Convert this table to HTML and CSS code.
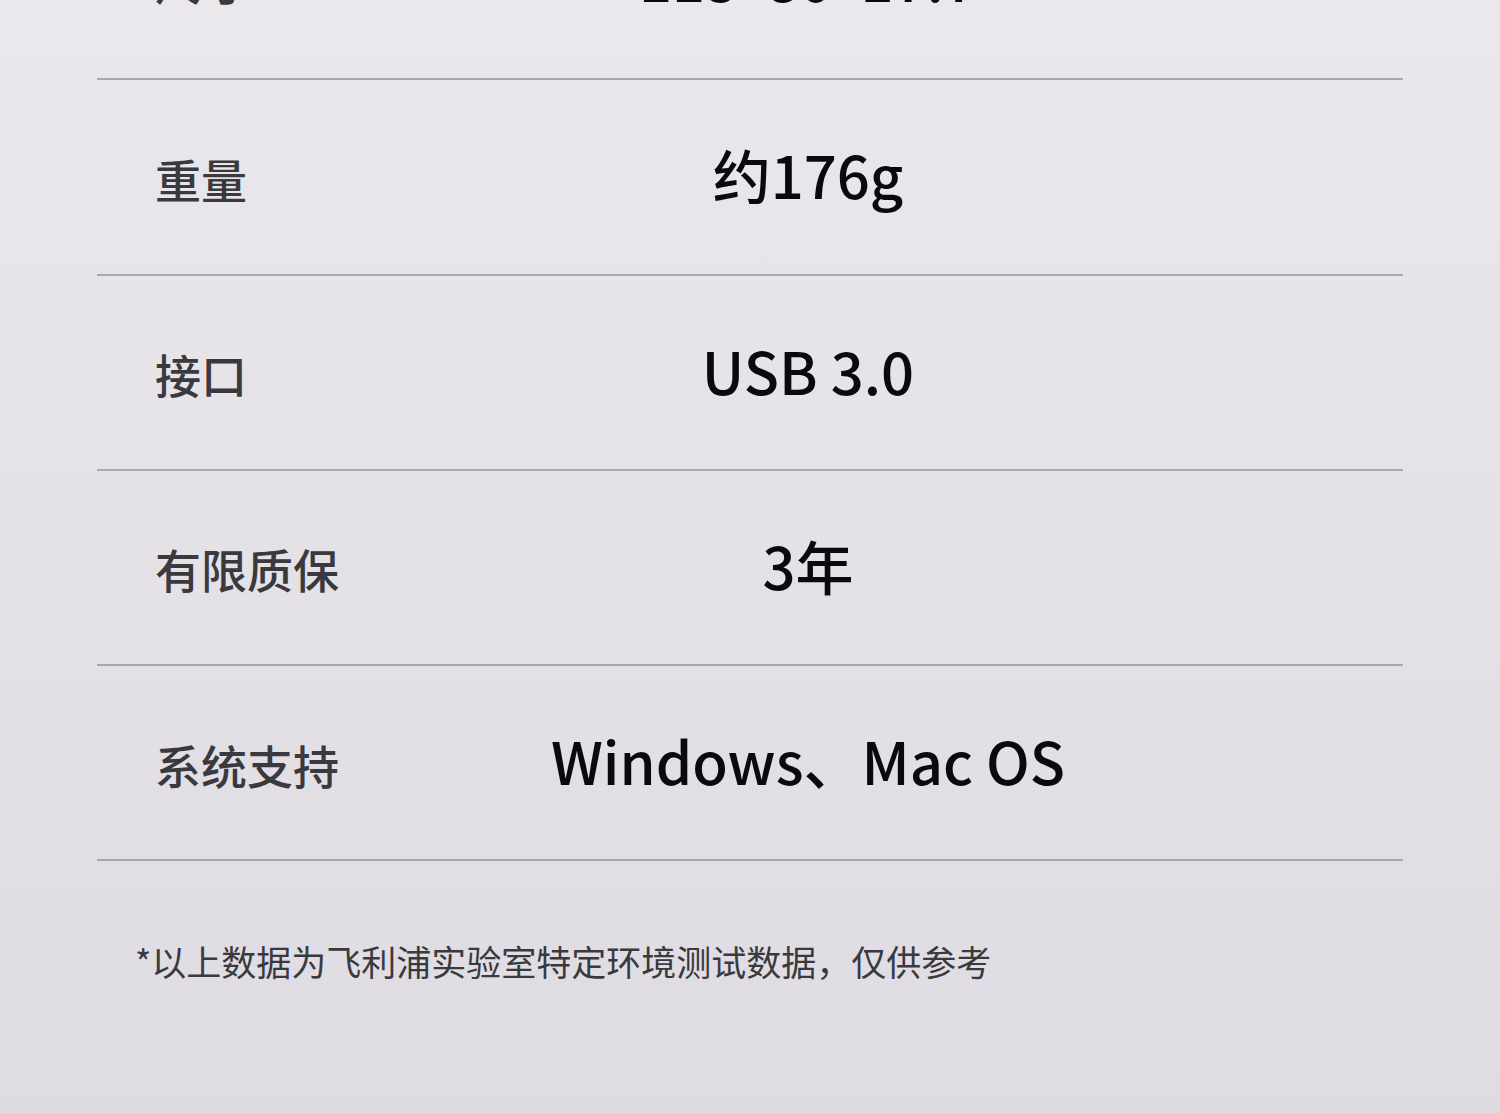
FILE: index.html
```html
<html>

<head>
  <meta name="viewport" content="width=device-width, initial-scale=1" />
  <link rel="stylesheet" href="styles.css">
  <title>产品参数</title>
</head>

<body>
  <div class="specs">
    <div class="spec-row spec-row--first">
      <div class="spec-label">尺寸</div>
      <div class="spec-value">115*80*17.7</div>
    </div>
    <div class="spec-row">
      <div class="spec-label">重量</div>
      <div class="spec-value">约176g</div>
    </div>
    <div class="spec-row">
      <div class="spec-label">接口</div>
      <div class="spec-value">USB 3.0</div>
    </div>
    <div class="spec-row">
      <div class="spec-label">有限质保</div>
      <div class="spec-value">3年</div>
    </div>
    <div class="spec-row">
      <div class="spec-label">系统支持</div>
      <div class="spec-value">Windows、Mac OS</div>
    </div>

    <p class="note">*以上数据为飞利浦实验室特定环境测试数据，仅供参考</p>
  </div>
</body>

</html>
```

FILE: styles.css
```css
html,
body {
  height: 100%;
}

body {
  margin: 0;
  overflow: hidden;
  font-family: "Noto Sans CJK SC", "Noto Sans", sans-serif;
  background: linear-gradient(180deg, #eae8ed 0%, #e4e2e7 50%, #dedce2 100%);
}

.specs {
  margin: -115px 97px 0;
}

.spec-row {
  display: grid;
  grid-template-columns: 250px 1fr 134px;
  align-items: center;
  height: 195.25px;
  box-sizing: border-box;
  border-bottom: 2px solid #a8a7ac;
}

/* top row is cut by the window edge */
.spec-row--first {
  padding-bottom: 5px;
}

.spec-label {
  padding-left: 58px;
  padding-top: 2px;
  font-size: 46px;
  font-weight: 500;
  color: #3a393d;
  white-space: nowrap;
}

.spec-value {
  padding-bottom: 5px;
  text-align: center;
  font-size: 58px;
  font-weight: 500;
  color: #0a0a0c;
  white-space: nowrap;
}

.note {
  margin: 0;
  padding: 74px 0 0 38px;
  font-size: 35px;
  color: #3a393d;
}
```
